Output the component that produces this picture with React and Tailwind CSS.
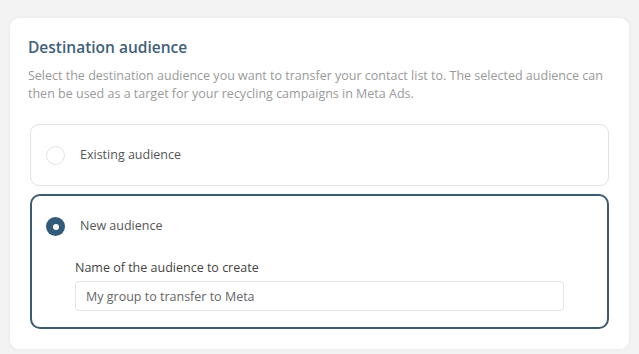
import React, { useState } from 'react';

const Radio = ({ checked }) => (
  <span
    className={
      checked
        ? 'w-[19px] h-[19px] rounded-full bg-[#335a79] flex items-center justify-center shrink-0'
        : 'w-[19px] h-[19px] rounded-full border border-[#e3e3e3] bg-white shrink-0'
    }
  >
    {checked && <span className="w-[6px] h-[6px] rounded-full bg-white" />}
  </span>
);

export default function App() {
  const [choice, setChoice] = useState('new');
  const [name, setName] = useState('');

  return (
    <div className="min-h-[354px] bg-[#f3f3f3] px-[10px] pt-[18px] pb-[6px] font-['Open_Sans',sans-serif]">
      <div className="bg-white rounded-[9px] shadow-[0_0_4px_rgba(0,0,0,0.05)] pl-[18px] pr-[18px] pt-[18px] pb-[20px]">
        <h2 className="text-[15.5px] leading-[22px] font-semibold text-[#3f6079]">Destination audience</h2>
        <p className="mt-[9px] text-[12.5px] leading-[18px] text-[#9a9a9a]">
          Select the destination audience you want to transfer your contact list to. The selected audience can then be used as a target for your recycling campaigns in Meta Ads.
        </p>

        <div className="mt-[21px] mx-[2px] flex flex-col gap-[8px]">
          <button
            onClick={() => setChoice('existing')}
            className={
              choice === 'existing'
                ? 'h-[62px] rounded-[9px] border-2 border-[#3d5b70] px-[14px] flex items-center gap-[15px] text-left'
                : 'h-[62px] rounded-[9px] border border-[#e2e2e2] px-[15px] flex items-center gap-[15px] text-left'
            }
          >
            <Radio checked={choice === 'existing'} />
            <span className="text-[12.5px] text-[#555]">Existing audience</span>
          </button>

          <div
            className={
              choice === 'new'
                ? 'rounded-[10px] border-2 border-[#3d5b70] pl-[14px] pr-[43px] pt-[21px] pb-[16px]'
                : 'rounded-[10px] border border-[#e2e2e2] pl-[15px] pr-[44px] pt-[22px] pb-[17px]'
            }
          >
            <button onClick={() => setChoice('new')} className="flex items-center gap-[15px] text-left">
              <Radio checked={choice === 'new'} />
              <span className="text-[12.5px] text-[#555]">New audience</span>
            </button>
            <div className="pl-[29px] mt-[23px]">
              <label className="block text-[12.5px] leading-[18px] text-[#444]">Name of the audience to create</label>
              <input
                value={name}
                onChange={(e) => setName(e.target.value)}
                placeholder="My group to transfer to Meta"
                className="mt-[4px] w-full h-[30px] rounded-[4px] border border-[#e4e4e4] px-[10px] text-[12.5px] text-[#444] placeholder:text-[#666] outline-none"
              />
            </div>
          </div>
        </div>
      </div>
    </div>
  );
}
